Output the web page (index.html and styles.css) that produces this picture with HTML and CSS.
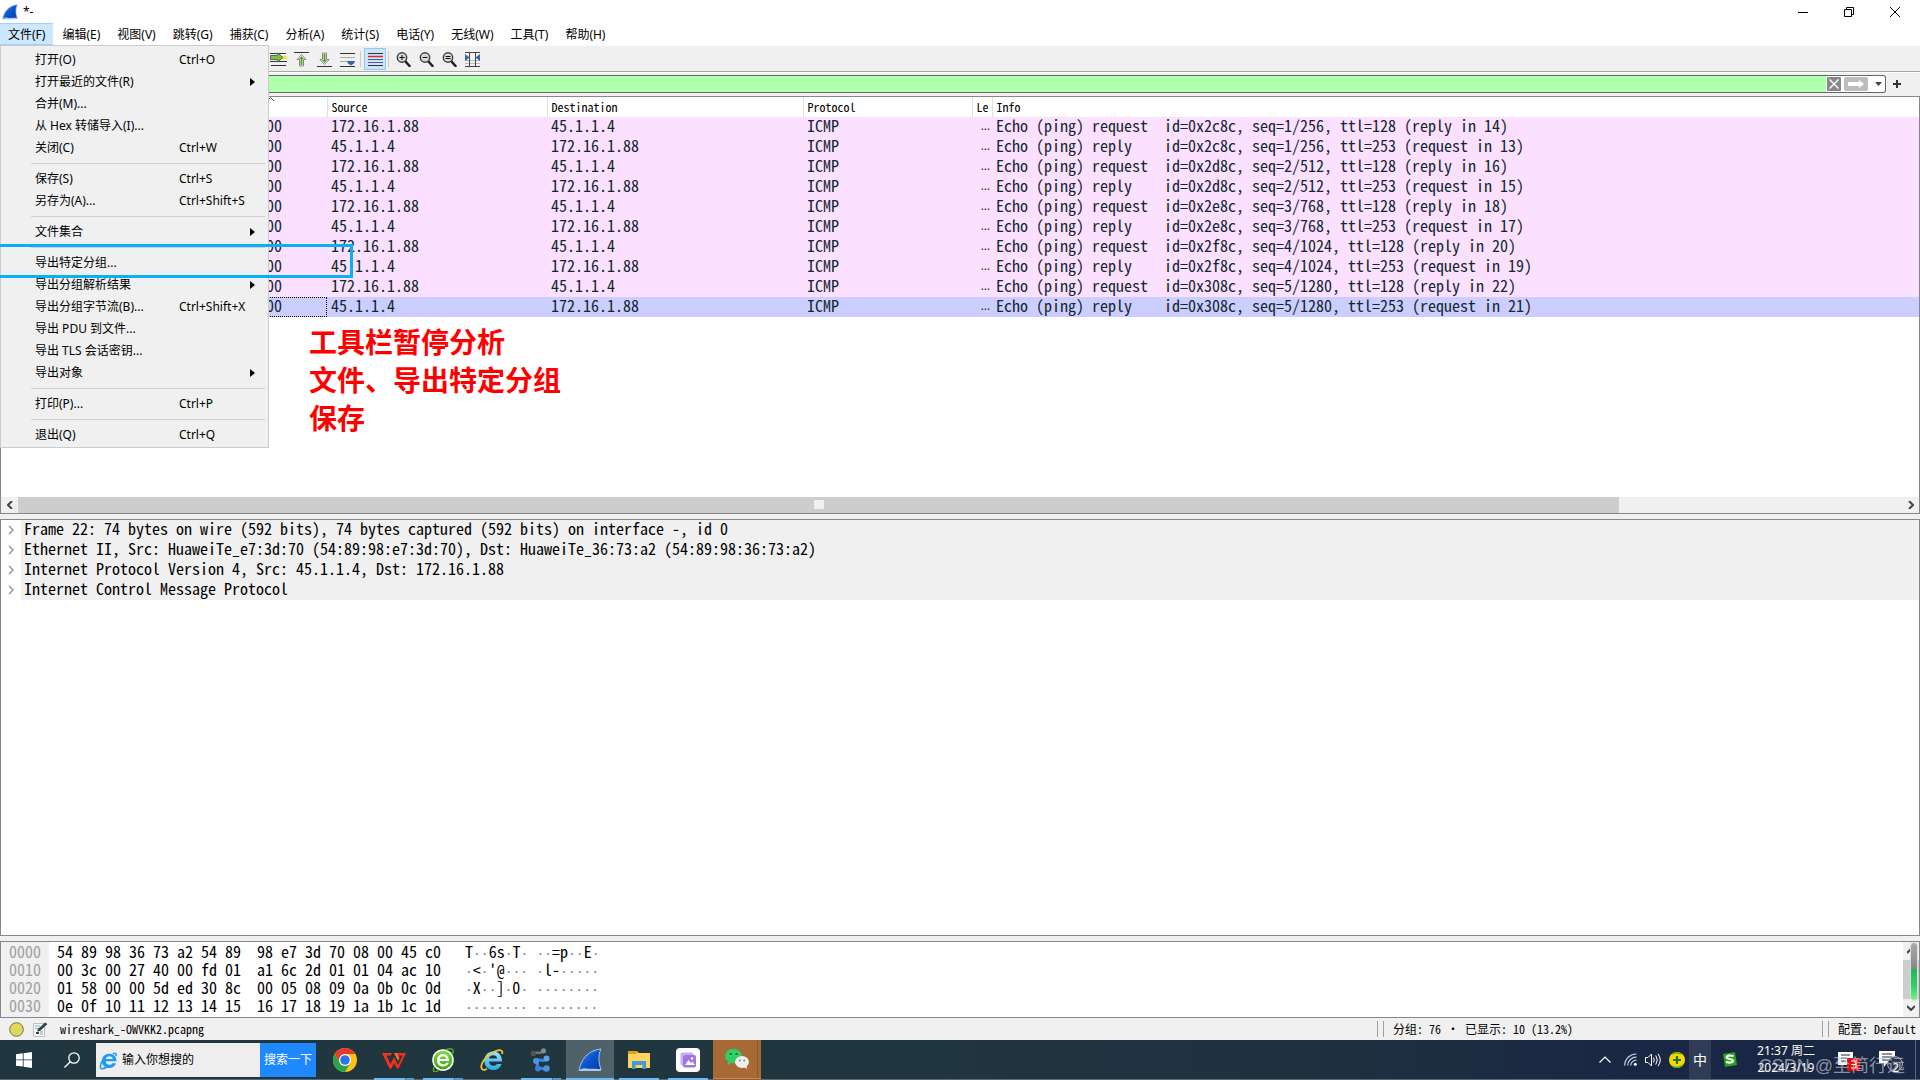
FILE: index.html
```html
<!DOCTYPE html>
<html lang="zh-CN">
<head>
<meta charset="utf-8">
<title>*-</title>
<meta name="viewport" content="width=device-width, initial-scale=1">
<link rel="stylesheet" href="styles.css">
</head>
<body>
<svg class="defs" aria-hidden="true">
  <defs>
    <linearGradient id="fin-fill" x1="0" y1="0" x2="1" y2="1"><stop offset="0" stop-color="#3b8cf0"/><stop offset=".5" stop-color="#0b55d0"/><stop offset="1" stop-color="#0a3a9c"/></linearGradient>
    <linearGradient id="green-fill" x1="0" y1="0" x2="0" y2="1"><stop offset="0" stop-color="#7ddc3c"/><stop offset="1" stop-color="#3fa516"/></linearGradient>
    <linearGradient id="blue-fill" x1="0" y1="0" x2="0" y2="1"><stop offset="0" stop-color="#9be4ff"/><stop offset="1" stop-color="#29a8ee"/></linearGradient>
    <symbol id="fin" viewBox="0 0 24 24"><path d="M1 22.500C3 12 9 2.500 23 1c-3 6-2.500 14 0 20.500z" fill="url(#fin-fill)" stroke="#9fc4ee" stroke-width="1"/><path d="M1 23c1.500-2.600 4-3.200 8-2.400 4 .8 9-.6 14 .8l0 1.600z" fill="#a9c7ef"/></symbol>
    <symbol id="lens" viewBox="0 0 15 15"><path d="M9.500 9.500l4 4.500" stroke="#222" stroke-width="2.600" stroke-linecap="round"/><circle cx="6" cy="5.500" r="4.700" fill="#d4d8d8" stroke="#3a3f40" stroke-width="1.400"/></symbol>
  </defs>
</svg>
<div class="desktop">
  <div class="window">
    <header class="titlebar">
      <svg class="app-icon" viewBox="0 0 24 24"><use href="#fin"/></svg>
      <span class="title">*-</span>
      <div class="window-buttons">
        <button type="button" aria-label="Minimize"><svg width="10" height="10" viewBox="0 0 10 10"><path d="M0 5.500h10" stroke="#000"/></svg></button>
        <button type="button" aria-label="Restore"><svg width="10" height="10" viewBox="0 0 10 10"><path d="M.5 2.500h7v7h-7zM2.500 2.500v-2h7v7h-2" fill="none" stroke="#000"/></svg></button>
        <button type="button" aria-label="Close"><svg width="10" height="10" viewBox="0 0 10 10"><path d="M0 0l10 10M10 0L0 10" stroke="#000"/></svg></button>
      </div>
    </header>
    <nav class="menubar">
      <button type="button" class="open">文件(F)</button><button type="button">编辑(E)</button><button type="button">视图(V)</button><button type="button">跳转(G)</button><button type="button">捕获(C)</button><button type="button">分析(A)</button><button type="button">统计(S)</button><button type="button">电话(Y)</button><button type="button">无线(W)</button><button type="button">工具(T)</button><button type="button">帮助(H)</button>
      <div class="menu" role="menu">
        <button type="button" role="menuitem"><span>打开(O)</span><kbd>Ctrl+O</kbd></button>
        <button type="button" role="menuitem" class="sub"><span>打开最近的文件(R)</span></button>
        <button type="button" role="menuitem"><span>合并(M)...</span></button>
        <button type="button" role="menuitem"><span>从 Hex 转储导入(I)...</span></button>
        <button type="button" role="menuitem"><span>关闭(C)</span><kbd>Ctrl+W</kbd></button>
        <hr>
        <button type="button" role="menuitem"><span>保存(S)</span><kbd>Ctrl+S</kbd></button>
        <button type="button" role="menuitem"><span>另存为(A)...</span><kbd>Ctrl+Shift+S</kbd></button>
        <hr>
        <button type="button" role="menuitem" class="sub"><span>文件集合</span></button>
        <hr>
        <button type="button" role="menuitem"><span>导出特定分组...</span></button>
        <button type="button" role="menuitem" class="sub"><span>导出分组解析结果</span></button>
        <button type="button" role="menuitem"><span>导出分组字节流(B)...</span><kbd>Ctrl+Shift+X</kbd></button>
        <button type="button" role="menuitem"><span>导出 PDU 到文件...</span></button>
        <button type="button" role="menuitem"><span>导出 TLS 会话密钥...</span></button>
        <button type="button" role="menuitem" class="sub"><span>导出对象</span></button>
        <hr>
        <button type="button" role="menuitem"><span>打印(P)...</span><kbd>Ctrl+P</kbd></button>
        <hr>
        <button type="button" role="menuitem"><span>退出(Q)</span><kbd>Ctrl+Q</kbd></button>
      </div>
    </nav>
    <div class="toolbar">
      <button type="button" aria-label="Go to packet"><svg class="wide" viewBox="0 0 17 15"><path d="M0 1.500h16M12 5.500h5M0 9.500h17M1 13.500h15" stroke="#333"/><path d="M11 4h6v3h-6z" fill="#f7e04a"/><path d="M.5 3.500h7V1l5.500 4.500L7.500 10V7.500h-7z" fill="#7bc143" stroke="#58705a"/></svg></button>
      <button type="button" aria-label="First packet"><svg viewBox="0 0 15 15"><path d="M0 .5h15" stroke="#333"/><path d="M7.500 2.500l4.500 5H9.500V14h-4V7.500H3z" fill="#fff" stroke="#888"/><path d="M7.500 4l2.500 3H8.500v6h-2V7H5z" fill="#54a51c"/></svg></button>
      <button type="button" aria-label="Last packet"><svg viewBox="0 0 15 15"><path d="M0 14.500h15" stroke="#333"/><path d="M7.500 12.500l4.500-5H9.500V1h-4v6.500H3z" fill="#fff" stroke="#888"/><path d="M7.500 11l2.500-3H8.500V2h-2v6H5z" fill="#54a51c"/></svg></button>
      <button type="button" aria-label="Auto scroll"><svg viewBox="0 0 15 15"><path d="M0 1.500h15M0 14.500h15" stroke="#333"/><path d="M0 5.500h15M0 9.500h7" stroke="#aaa"/><path d="M7 9h8l-1 2.500-3 2-3-2z" fill="#3465a4"/></svg></button>
      <i class="divider"></i>
      <button type="button" class="pressed" aria-label="Colorize"><svg viewBox="0 0 15 15"><path d="M0 1.500h15" stroke="#333"/><path d="M0 4.500h15" stroke="#e22" stroke-width="1.500"/><path d="M0 7.500h15" stroke="#3465a4"/><path d="M0 10.500h15" stroke="#75507b"/><path d="M0 13.500h15" stroke="#333"/></svg></button>
      <i class="divider"></i>
      <button type="button" aria-label="Zoom in"><svg viewBox="0 0 15 15"><use href="#lens"/><path d="M3.500 5.500h5M6 3v5" stroke="#111"/></svg></button>
      <button type="button" aria-label="Zoom out"><svg viewBox="0 0 15 15"><use href="#lens"/><path d="M3.500 5.500h5" stroke="#111"/></svg></button>
      <button type="button" aria-label="Normal size"><svg viewBox="0 0 15 15"><use href="#lens"/><path d="M3.500 4.500h5M3.500 6.500h5" stroke="#111"/></svg></button>
      <button type="button" aria-label="Resize columns"><svg viewBox="0 0 15 15"><path d="M0 8.500h15M0 11.500h15" stroke="#bbb"/><path d="M0 .5h15M0 14.500h15M4.500 0v15M10.500 0v15" stroke="#444"/><path d="M0 2l4.500 3.500L0 9zM15 2l-4.500 3.500L15 9z" fill="#3465a4"/></svg></button>
    </div>
    <div class="filterbar">
      <div class="filter">
        <input type="text" aria-label="Display filter">
        <button type="button" class="clear" aria-label="Clear"><svg width="14" height="14" viewBox="0 0 14 14"><rect width="14" height="14" rx="1" fill="#888"/><path d="M2.500 2.500l9 9M11.500 2.500l-9 9" stroke="#fff" stroke-width="1.400"/></svg></button>
        <button type="button" class="apply" aria-label="Apply"><svg width="24" height="14" viewBox="0 0 24 14"><rect width="24" height="14" rx="2" fill="#bdbdbd"/><path d="M4 5h11V3l5 4-5 4V9H4z" fill="#fff"/></svg></button>
        <button type="button" class="drop" aria-label="History"><svg width="7" height="4" viewBox="0 0 7 4"><path d="M0 0h7L3.500 4z" fill="#444"/></svg></button>
      </div>
      <button type="button" class="add" aria-label="Add filter"><svg width="8" height="8" viewBox="0 0 8 8"><path d="M0 4h8M4 0v8" stroke="#333" stroke-width="2"/></svg></button>
    </div>

    <main class="panes">
      <section class="pane packet-pane">
        <table class="packets" lang="en">
          <colgroup><col class="c-time"><col class="c-src"><col class="c-dst"><col class="c-proto"><col class="c-len"><col></colgroup>
          <thead><tr><th class="time"><svg width="7" height="4" viewBox="0 0 7 4"><path d="M0 4l3.500-3.500L7 4" fill="none" stroke="#555"/></svg></th><th>Source</th><th>Destination</th><th>Protocol</th><th>Le</th><th>Info</th></tr></thead>
          <tbody>
            <tr><td>00</td><td>172.16.1.88</td><td>45.1.1.4</td><td>ICMP</td><td>…</td><td>Echo (ping) request  id=0x2c8c, seq=1/256, ttl=128 (reply in 14)</td></tr>
            <tr><td>00</td><td>45.1.1.4</td><td>172.16.1.88</td><td>ICMP</td><td>…</td><td>Echo (ping) reply    id=0x2c8c, seq=1/256, ttl=253 (request in 13)</td></tr>
            <tr><td>00</td><td>172.16.1.88</td><td>45.1.1.4</td><td>ICMP</td><td>…</td><td>Echo (ping) request  id=0x2d8c, seq=2/512, ttl=128 (reply in 16)</td></tr>
            <tr><td>00</td><td>45.1.1.4</td><td>172.16.1.88</td><td>ICMP</td><td>…</td><td>Echo (ping) reply    id=0x2d8c, seq=2/512, ttl=253 (request in 15)</td></tr>
            <tr><td>00</td><td>172.16.1.88</td><td>45.1.1.4</td><td>ICMP</td><td>…</td><td>Echo (ping) request  id=0x2e8c, seq=3/768, ttl=128 (reply in 18)</td></tr>
            <tr><td>00</td><td>45.1.1.4</td><td>172.16.1.88</td><td>ICMP</td><td>…</td><td>Echo (ping) reply    id=0x2e8c, seq=3/768, ttl=253 (request in 17)</td></tr>
            <tr><td>00</td><td>172.16.1.88</td><td>45.1.1.4</td><td>ICMP</td><td>…</td><td>Echo (ping) request  id=0x2f8c, seq=4/1024, ttl=128 (reply in 20)</td></tr>
            <tr><td>00</td><td>45.1.1.4</td><td>172.16.1.88</td><td>ICMP</td><td>…</td><td>Echo (ping) reply    id=0x2f8c, seq=4/1024, ttl=253 (request in 19)</td></tr>
            <tr><td>00</td><td>172.16.1.88</td><td>45.1.1.4</td><td>ICMP</td><td>…</td><td>Echo (ping) request  id=0x308c, seq=5/1280, ttl=128 (reply in 22)</td></tr>
            <tr class="selected"><td>00</td><td>45.1.1.4</td><td>172.16.1.88</td><td>ICMP</td><td>…</td><td>Echo (ping) reply    id=0x308c, seq=5/1280, ttl=253 (request in 21)</td></tr>
          </tbody>
        </table>
        <div class="hscroll">
          <button type="button" aria-label="Scroll left"><svg width="6" height="8" viewBox="0 0 6 8"><path d="M5 0L1 4l4 4" fill="none" stroke="#444" stroke-width="2"/></svg></button>
          <div class="track"><div class="thumb"><i></i></div></div>
          <button type="button" aria-label="Scroll right"><svg width="6" height="8" viewBox="0 0 6 8"><path d="M1 0l4 4-4 4" fill="none" stroke="#444" stroke-width="2"/></svg></button>
        </div>
      </section>
      <section class="pane details-pane">
        <ul class="tree">
          <li><svg viewBox="0 0 6 10"><path d="M1 1l4 4-4 4" fill="none" stroke="#999" stroke-width="1.500"/></svg><span>Frame 22: 74 bytes on wire (592 bits), 74 bytes captured (592 bits) on interface -, id 0</span></li>
          <li><svg viewBox="0 0 6 10"><path d="M1 1l4 4-4 4" fill="none" stroke="#999" stroke-width="1.500"/></svg><span>Ethernet II, Src: HuaweiTe_e7:3d:70 (54:89:98:e7:3d:70), Dst: HuaweiTe_36:73:a2 (54:89:98:36:73:a2)</span></li>
          <li><svg viewBox="0 0 6 10"><path d="M1 1l4 4-4 4" fill="none" stroke="#999" stroke-width="1.500"/></svg><span>Internet Protocol Version 4, Src: 45.1.1.4, Dst: 172.16.1.88</span></li>
          <li><svg viewBox="0 0 6 10"><path d="M1 1l4 4-4 4" fill="none" stroke="#999" stroke-width="1.500"/></svg><span>Internet Control Message Protocol</span></li>
        </ul>
      </section>
      <section class="pane bytes-pane" lang="en">
        <pre class="offsets">0000
0010
0020
0030</pre>
        <pre class="bytes">54 89 98 36 73 a2 54 89  98 e7 3d 70 08 00 45 c0   T<i>··</i>6s<i>·</i>T<i>·</i> <i>··</i>=p<i>··</i>E<i>·</i>
00 3c 00 27 40 00 fd 01  a1 6c 2d 01 01 04 ac 10   <i>·</i>&lt;<i>·</i>'@<i>···</i> <i>·</i>l-<i>·····</i>
01 58 00 00 5d ed 30 8c  00 05 08 09 0a 0b 0c 0d   <i>·</i>X<i>··</i>]<i>·</i>0<i>·</i> <i>········</i>
0e 0f 10 11 12 13 14 15  16 17 18 19 1a 1b 1c 1d   <i>········</i> <i>········</i></pre>
        <div class="vscroll">
          <button type="button" aria-label="Scroll up"><svg width="8" height="6" viewBox="0 0 8 6"><path d="M0 5l4-4 4 4" fill="none" stroke="#444" stroke-width="2"/></svg></button>
          <div class="thumb"></div>
          <button type="button" aria-label="Scroll down"><svg width="8" height="6" viewBox="0 0 8 6"><path d="M0 1l4 4 4-4" fill="none" stroke="#444" stroke-width="2"/></svg></button>
          <div class="meter"></div>
        </div>
      </section>
    </main>

    <footer class="statusbar">
      <svg width="15" height="15" viewBox="0 0 15 15"><circle cx="7.500" cy="7.500" r="6.800" fill="#dcd95c" stroke="#77753c"/></svg>
      <svg width="15" height="15" viewBox="0 0 15 15"><path d="M.5 1.500h11v13H.5z" fill="#f4f6f8" stroke="#b8c0c8"/><path d="M2 4h5M2 6.500h4M7 10h3M7 12h3" stroke="#8aa"/><path d="M4 9.500l1-2.500 7-6.500L14.500 2 7 9z" fill="#33424f"/><path d="M3 10h3v2H3z" fill="#345"/></svg>
      <span class="file">wireshark_-OWVKK2.pcapng</span>
      <span class="cell counts">分组: 76 · 已显示: 10 (13.2%)</span>
      <span class="cell profile">配置: Default</span>
    </footer>
    <div class="highlight"></div>
    <div class="note">工具栏暂停分析<br>文件、导出特定分组<br>保存</div>
  </div>

  <div class="taskbar">
    <button type="button" class="start" aria-label="Start"><svg width="16" height="16" viewBox="0 0 16 16"><path d="M0 2.300L6.800 1.300v6.200H0zM7.600 1.200L16 0v7.500H7.600zM0 8.300h6.800v6.300L0 13.700zM7.600 8.300H16V16l-8.400-1.200z" fill="#fff"/></svg></button>
    <button type="button" class="find" aria-label="Search"><svg width="16" height="16" viewBox="0 0 16 16"><circle cx="10" cy="6" r="5.200" fill="none" stroke="#fff" stroke-width="1.300"/><path d="M6.300 9.700L.5 15.500" stroke="#fff" stroke-width="1.300"/></svg></button>
    <form class="search">
      <svg width="19" height="19" viewBox="0 0 24 24"><path d="M22 13H8.500c.2 3 2 4.500 4.500 4.500 2 0 3.300-.8 4-2h4.600C20.300 19 17 21.500 13 21.500c-5.500 0-9.300-3.800-9.300-9S7.500 3.500 13 3.500c5.600 0 9.500 4 9 9.500zM8.600 10h8.800c-.3-2.200-2-3.300-4.300-3.300S9 7.800 8.600 10z" fill="#1e9bf5"/><path d="M21.500 6.500c1-3-.6-4.300-4-3M4.500 12C1 18 1 22.500 3.500 22.500c2 0 4-.8 6-2" fill="none" stroke="#1e9bf5" stroke-width="2"/></svg>
      <input type="text" value="输入你想搜的" aria-label="搜索">
      <button type="button">搜索一下</button>
    </form>
    <div class="apps">
      <button type="button" aria-label="Chrome"><svg viewBox="0 0 24 24"><circle cx="12" cy="12" r="12" fill="#fbc116"/><path d="M12 6h10.400a12 12 0 0 0-20.800 0L7 15z" fill="#e33b2e"/><path d="M1.600 6a12 12 0 0 0 10.400 18l5.200-9L7 15z" fill="#2ba24c"/><circle cx="12" cy="12" r="6" fill="#fff"/><circle cx="12" cy="12" r="4.800" fill="#2f73e8"/></svg></button>
      <button type="button" class="running stacked" aria-label="WPS"><svg viewBox="0 0 24 24"><path d="M0 5h10l-1 2.500H4.500l4 8.500 3.500-7 4 8L20.500 7.500H15L14 5h10l-7.500 15.500h-1.500l-3-5.500-2.500 5.500H7.500z" fill="#f2301c"/><path d="M12 5h3l2.500 5-1.500 3z" fill="#ff6a2a"/></svg></button>
      <button type="button" class="running stacked" aria-label="360"><svg viewBox="0 0 24 24"><circle cx="12" cy="12" r="10.800" fill="#fff"/><circle cx="12" cy="12" r="9.300" fill="url(#green-fill)"/><path d="M18 13H8.500c.3 2.300 1.700 3.300 3.700 3.300 1.600 0 2.600-.5 3.200-1.500h2.500c-.9 2.400-3 3.700-5.800 3.700C8.300 18.500 6 16 6 12.300S8.500 6 12 6s6.100 2.500 6 7zM8.600 11h6.800c-.3-1.900-1.600-2.800-3.400-2.800S9 9.100 8.600 11z" fill="#fff"/><path d="M3 19C1 26 5 24 8 22M15 2c6-3 9 0 6 5" fill="none" stroke="#4fa828" stroke-width="1.500"/></svg></button>
      <button type="button" aria-label="Internet Explorer"><svg viewBox="0 0 24 24"><path d="M22 13.500H9c.2 3 2 4.200 4.300 4.200 2 0 3-.7 3.700-1.800h4.600c-1.300 3.800-4.300 6.100-8.400 6.100-5.300 0-8.800-3.800-8.800-9.200S8 3.500 13.200 3.500c5.500 0 9 4 8.800 10zM9 10.500h8.200c-.3-2.200-1.800-3.200-4-3.200S9.400 8.300 9 10.500z" fill="url(#blue-fill)"/><path d="M22 6c1.500-4-2-5-8-2.200C6 7.500-1 17 2 21c1 1.200 3 1 5 0" fill="none" stroke="#f2c42b" stroke-width="1.800"/></svg></button>
      <button type="button" class="running stacked" aria-label="eNSP"><svg viewBox="0 0 24 24"><path d="M4 6c4-3 6 1 11-3" fill="none" stroke="#777" stroke-width="2.500"/><circle cx="4.500" cy="5.500" r="2.800" fill="#555"/><circle cx="14.500" cy="2.800" r="2.600" fill="#8a8a8a"/><path d="M18 11c-4 4-7-1-11 2 4 3-1 5 2 8 3-3 7 2 10 0" fill="none" stroke="#3b86dc" stroke-width="3"/><circle cx="17.500" cy="10.500" r="3" fill="#5aa2ee"/><circle cx="7" cy="13" r="3" fill="#4a94e6"/><circle cx="9" cy="20.500" r="3" fill="#3a80d8"/><circle cx="17.500" cy="20.500" r="3.200" fill="#4a94e6"/></svg></button>
      <button type="button" class="running active" aria-label="Wireshark"><svg viewBox="0 0 24 24"><use href="#fin"/></svg></button>
      <button type="button" class="running" aria-label="Explorer"><svg viewBox="0 0 24 24"><path d="M1 3h9l1.500 2H23v15H1z" fill="#ffd45e"/><path d="M1 3h9l0 3H1z" fill="#e0a010"/><path d="M5 21v-8h14v8h-3.500v-4h-7v4z" fill="#3e9bdc"/></svg></button>
      <button type="button" class="running" aria-label="Pictures"><svg viewBox="0 0 24 24"><rect width="24" height="24" rx="4" fill="#fff"/><rect x="4.500" y="4.500" width="13" height="13" rx="2" fill="#c5b0f2"/><rect x="7" y="7" width="13" height="12.500" rx="2" fill="#9d78e2"/><path d="M9 17l3.500-5 2.500 3 1.500-1.500L19 17z" fill="#fff"/><circle cx="16" cy="10.500" r="1.200" fill="#fff"/></svg></button>
      <button type="button" class="alert" aria-label="WeChat"><svg viewBox="0 0 24 24"><ellipse cx="8.500" cy="9" rx="8.500" ry="7.200" fill="#2fcf65"/><path d="M3 14l-.5 4 4-2z" fill="#2fcf65"/><circle cx="5.700" cy="7" r="1.100" fill="#175a30"/><circle cx="11.500" cy="7" r="1.100" fill="#175a30"/><ellipse cx="17" cy="15" rx="7" ry="6" fill="#eee"/><path d="M19 20l3 2-.3-3z" fill="#eee"/><circle cx="14.800" cy="13.500" r=".9" fill="#777"/><circle cx="19.200" cy="13.500" r=".9" fill="#777"/></svg></button>
    </div>
    <div class="tray">
      <button type="button" class="t-up" aria-label="Hidden icons"><svg width="12" height="7" viewBox="0 0 12 7"><path d="M.5 6.500L6 1l5.500 5.500" fill="none" stroke="#fff" stroke-width="1.200"/></svg></button>
      <button type="button" class="t-net" aria-label="Network"><svg width="13" height="13" viewBox="0 0 13 13"><path d="M.7 12.500A11.500 11.500 0 0 1 12.500 1M3.700 12.500a8.500 8.500 0 0 1 8.800-8.300M6.700 12.500a5.500 5.500 0 0 1 5.800-5.300" fill="none" stroke="#c8ced8" stroke-width="1.200"/><circle cx="11.300" cy="11.300" r="1.500" fill="#fff"/></svg></button>
      <button type="button" class="t-vol" aria-label="Volume"><svg width="16" height="14" viewBox="0 0 16 14"><path d="M.5 4.500h2.500L6.500 1v12L3 9.500H.5zM8.500 4.500q1.500 2.500 0 5M10.800 2.500q3 4.500 0 9M13 .8q4.500 6.200 0 12.400" fill="none" stroke="#fff"/></svg></button>
      <button type="button" class="t-safe" aria-label="Security"><svg width="16" height="16" viewBox="0 0 16 16"><circle cx="8" cy="8" r="8" fill="#f8d800"/><path d="M2 3A8 8 0 0 1 14 3Q8 0 2 3zM1 12q7 6 14-1-3 5-7 5t-7-4z" fill="#43a52c"/><path d="M4 8h8M8 4v8" stroke="#187a22" stroke-width="2.200"/></svg></button>
      <button type="button" class="t-ime">中</button>
      <button type="button" class="t-sogou" aria-label="Sogou"><svg width="15" height="15" viewBox="0 0 15 15"><path d="M1 2l12-2 2 13-12 2z" fill="#21a616"/><path d="M11.500 4.200C8 2.800 4.500 3.600 4.700 5.500c.2 1.800 6 1.200 6.200 3.200.1 2-4 2.400-6.900 1" fill="none" stroke="#fff" stroke-width="2.200"/></svg></button>
      <div class="clock">21:37 周二<br>2024/3/19</div>
      <button type="button" class="t-mail" aria-label="Messages"><svg width="24" height="24" viewBox="0 0 24 24"><path d="M1 4h15v13H1z" fill="#fff"/><path d="M4 7h9M4 10h6M4 13h5" stroke="#1a2744"/><rect x="10" y="10" width="13" height="13" rx="1" fill="#df0a0a"/><path d="M14 13h5v7h-5M14 16.500h5" fill="none" stroke="#fff" stroke-width="1.200"/></svg></button>
      <button type="button" class="t-notes" aria-label="Notifications"><svg width="24" height="24" viewBox="0 0 24 24"><path d="M0 3h16v12H8l-3 4v-4H0z" fill="#fff"/><path d="M3 6h10M3 9h10M3 12h10" stroke="#1a2744"/><circle cx="16" cy="16" r="7.400" fill="#263248" stroke="#aab"/></svg><b>2</b></button>
      <span class="watermark">CSDN @至简行远</span>
    </div>
  </div>
</div>
</body>
</html>
```

FILE: styles.css
```css
:root {
  --ui: "Noto Sans", "Noto Sans CJK SC", sans-serif;
  --fixed: "Noto Sans Mono CJK SC", "Liberation Mono", monospace;
  --edge: #828790;
  --chrome: #f0f0f0;
}

* { box-sizing: border-box; }

body {
  margin: 0;
  font: 12px/16px var(--ui);
  color: #000;
  background: #fff;
}

button {
  border: 0;
  padding: 0;
  background: none;
  color: inherit;
  font: inherit;
}

svg { display: block; flex: none; }

.defs { position: absolute; width: 0; height: 0; }

.desktop {
  display: flex;
  flex-direction: column;
  min-height: 100vh;
}

.window {
  position: relative;
  flex: 1;
  display: flex;
  flex-direction: column;
  background: var(--chrome);
}

/* title and menus */
.titlebar {
  display: flex;
  align-items: center;
  height: 23px;
  padding-left: 2px;
  background: #fff;
}
.app-icon { width: 16px; height: 16px; }
.title { flex: 1; padding-left: 5px; }
.window-buttons { display: flex; padding-right: 2px; }
.window-buttons button {
  display: flex;
  align-items: center;
  justify-content: center;
  width: 46px;
  height: 22px;
}

.menubar {
  position: relative;
  display: flex;
  gap: 1px;
  height: 24px;
  padding-bottom: 1px;
  background: #fff;
  border-bottom: 1px solid #eee;
}
.menubar > button {
  padding: 2px 8px 0;
  border: 1px solid transparent;
  border-width: 1px 0;
}
.menubar > .open { background: #cce8ff; border-color: #99d1ff; }

.menu {
  position: absolute;
  z-index: 2;
  top: 22px;
  left: 0;
  width: 269px;
  padding: 3px 1px 1px;
  background: var(--chrome);
  border: 1px solid #ccc;
}
.menu button {
  display: grid;
  grid-template-columns: 144px 1fr;
  align-items: center;
  width: 100%;
  height: 22px;
  padding-left: 33px;
  text-align: left;
  white-space: nowrap;
}
.menu kbd { font: inherit; }
.menu hr {
  height: 1px;
  margin: 4px 2px 4px 29px;
  border: 0;
  background: #d2d2d2;
}
.menu .sub::after {
  content: "";
  justify-self: end;
  margin-right: 12px;
  border: 4px solid transparent;
  border-left: 5px solid #000;
  border-right: 0;
}

/* toolbar */
.toolbar {
  display: flex;
  align-items: center;
  gap: 1px;
  height: 25px;
  padding-left: 267px;
  border-bottom: 1px solid #a8a8a8;
}
.toolbar button {
  display: flex;
  align-items: center;
  justify-content: center;
  width: 22px;
  height: 22px;
}
.toolbar svg { width: 15px; height: 15px; }
.toolbar .wide { width: 17px; }
.toolbar .pressed { background: #cce4f7; border: 1px solid #90c8f6; }
.divider { width: 1px; height: 16px; margin: 0 2px 0 1px; background: #ccc; }

.filterbar {
  display: flex;
  align-items: center;
  height: 24px;
  padding-bottom: 1px;
  border-top: 1px solid #fff;
}
.filter {
  flex: 1;
  display: flex;
  align-items: center;
  height: 18px;
  background: #fff;
  border: 1px solid #666;
  border-left: 0;
  border-radius: 3px;
}
.filter input {
  flex: 1;
  height: 16px;
  min-width: 0;
  padding: 0 4px;
  border: 0;
  background: #afffaf;
  font: inherit;
}
.clear { margin-left: 1px; }
.apply { margin-left: 3px; }
.drop { width: 17px; display: flex; justify-content: center; padding-left: 4px; }
.add { display: flex; justify-content: center; width: 34px; padding-right: 12px; }

/* panes */
.panes {
  flex: 1;
  display: flex;
  flex-direction: column;
  gap: 5px;
}
.pane { background: #fff; border: 1px solid var(--edge); }
.packet-pane, .details-pane {
  flex: 1 1 0;
  display: flex;
  flex-direction: column;
  justify-content: space-between;
}

.packets {
  width: 100%;
  table-layout: fixed;
  border-collapse: collapse;
  font: 16px/16px var(--fixed);
  color: #12272e;
}
.c-time { width: 326px; }
.c-src { width: 220px; }
.c-dst { width: 256px; }
.c-proto { width: 169px; }
.c-len { width: 20px; }
.packets th {
  height: 20px;
  padding: 0 0 0 4px;
  background: #fff;
  border-left: 1px solid #e0e0e0;
  color: #000;
  font: 12px/20px var(--fixed);
  text-align: left;
  vertical-align: top;
  white-space: nowrap;
}
.packets .time { border-left: 0; padding: 0 53px 0 0; }
.time svg { margin-left: auto; }
.packets td {
  height: 20px;
  padding: 0 0 0 4px;
  background: #fce0ff;
  vertical-align: top;
  white-space: pre;
}
.packets td:first-child { padding-right: 45px; text-align: right; }
.packets td:nth-child(5) {
  padding: 1px 2px 0 0;
  font: 12px/16px "Open Sans", sans-serif;
  text-align: right;
}
.packets .selected td { background: #cbcefe; }
.packets .selected td:first-child { outline: 1px dotted #000; outline-offset: -1px; }

.hscroll { display: flex; height: 16px; background: var(--chrome); }
.hscroll button {
  display: flex;
  align-items: center;
  justify-content: center;
  width: 17px;
}
.track { flex: 1; display: flex; }
.hscroll .thumb {
  width: 85%;
  display: flex;
  align-items: center;
  justify-content: center;
  background: #cdcdcd;
}
.thumb i { width: 10px; height: 9px; background: var(--chrome); }

.tree {
  margin: 0;
  padding: 0;
  list-style: none;
  font: 16px/16px var(--fixed);
}
.tree li { display: flex; align-items: center; }
.tree svg { width: 6px; height: 10px; margin: 0 7px; }
.tree span {
  flex: 1;
  padding: 0 0 4px 3px;
  background: var(--chrome);
  white-space: pre;
}

.bytes-pane {
  display: flex;
  font: 16px/18px var(--fixed);
}
.bytes-pane pre { margin: 0; font: inherit; padding: 0 0 3px 8px; }
.offsets { width: 48px; background: var(--chrome); color: #a0a0a0; }
.bytes { flex: 1; }
.bytes i {
  color: #808080;
  font: 13px/8px "DejaVu Sans Mono", monospace;
}
.vscroll {
  position: relative;
  display: flex;
  flex-direction: column;
  width: 16px;
  background: var(--chrome);
}
.vscroll button {
  display: flex;
  align-items: center;
  justify-content: center;
  height: 18px;
}
.vscroll .thumb { flex: 1; background: #cdcdcd; }
.meter {
  position: absolute;
  top: 0;
  right: 1px;
  width: 8px;
  height: 59px;
  border: 1px solid #ddd;
  border-radius: 4px;
  background: linear-gradient(#aaa 0, #888 45%, #1eb85c 46%, #2fd06a 75%, #7df08a 100%);
}

.statusbar {
  display: flex;
  align-items: center;
  height: 22px;
  padding-left: 9px;
  gap: 9px;
  font: 12px/16px var(--fixed);
}
.file { flex: 1; padding-left: 3px; }
.cell {
  display: flex;
  align-items: center;
  white-space: nowrap;
}
.cell::before {
  content: "";
  width: 5px;
  height: 16px;
  margin-right: 9px;
  border: 1px solid #a0a0a0;
  border-width: 0 1px;
}
.counts { width: 436px; }
.profile { padding-right: 4px; }

/* callouts over the window */
.highlight {
  position: absolute;
  z-index: 3;
  top: 244px;
  left: -3px;
  width: 356px;
  height: 34px;
  border: 3px solid #0ab1f2;
}
.note {
  position: absolute;
  z-index: 3;
  top: 322px;
  left: 309px;
  color: #f00;
  font: bold 28px/38px "Noto Sans CJK SC", sans-serif;
}

/* taskbar */
.taskbar {
  display: flex;
  align-items: stretch;
  height: 40px;
  background: linear-gradient(90deg, #20373f 0, #20363f 45%, #1d303f 70%, #1a2744 85%);
  border-bottom: 1px solid #596a72;
  color: #fff;
}
.taskbar button {
  display: flex;
  align-items: center;
  justify-content: center;
}
.start, .find { width: 48px; }
.search {
  display: flex;
  align-items: center;
  width: 220px;
  margin: 3px 5px 2px 0;
  padding-left: 3px;
  background: #eee;
}
.search input {
  flex: 1;
  min-width: 0;
  padding: 0 0 0 4px;
  border: 0;
  background: none;
  color: #000;
  font: inherit;
}
.search button { align-self: stretch; width: 56px; background: #1e88ff; }
.apps { flex: 1; display: flex; gap: 1px; }
.apps button { position: relative; width: 48px; }
.apps svg { width: 24px; height: 24px; }
.running::after {
  content: "";
  position: absolute;
  right: 4px;
  bottom: -1px;
  left: 4px;
  height: 2px;
  background: #76b9ed;
}
.stacked::after { background: linear-gradient(90deg, #76b9ed 31px, #45708e 31px, #45708e 32px, #5f97c4 32px); }
.active { background: #4f6269; }
.taskbar .active { background: #4f6269; }
.active::after { right: 0; left: 0; }
.taskbar .alert {
  background: linear-gradient(90deg, #a86a34 44px, #8c552b 44px, #8c552b 45px, #a86a34 45px);
  border-bottom: 1px solid #ff7a1a;
}

.tray {
  position: relative;
  display: flex;
  align-items: stretch;
  margin-right: 4px;
  border-right: 1px solid #5c6780;
}
.t-up { width: 26px; }
.t-net { width: 24px; }
.t-vol { width: 22px; }
.t-safe { width: 25px; }
.t-ime { width: 22px; background: #303c55; }
.taskbar .t-ime { font-size: 14px; }
.t-sogou { width: 37px; }
.clock {
  width: 83px;
  padding: 2px 7px 0 0;
  line-height: 17px;
  text-align: center;
}
.t-mail { width: 36px; }
.t-notes { position: relative; width: 48px; }
.t-notes b { position: absolute; right: 16px; bottom: 3px; font-weight: 400; }
.watermark {
  position: absolute;
  right: 10px;
  bottom: 0;
  color: rgba(200, 205, 215, .65);
  font: 18px/26px "Liberation Sans", "Noto Sans CJK SC", sans-serif;
  white-space: nowrap;
}
```
